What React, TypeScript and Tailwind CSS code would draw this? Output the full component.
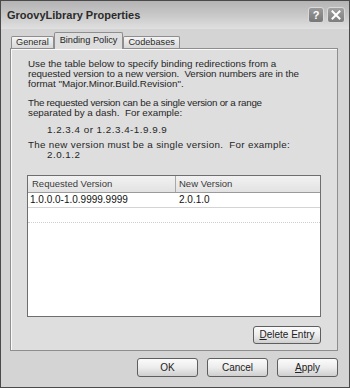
const font = { fontFamily: '"Liberation Sans", Arial, sans-serif' };

const XpButton = ({ children, className = '' }: { children: React.ReactNode; className?: string }) => (
  <div
    className={`flex items-center justify-center rounded-[3px] border border-[#5e5e5e] bg-gradient-to-b from-[#fbfbfb] via-[#ececec] to-[#cfcfcf] text-[10px] text-[#222] ${className}`}
  >
    {children}
  </div>
);

const Tab = ({ label, active }: { label: string; active?: boolean }) =>
  active ? (
    <div className="relative z-10 -mb-px flex h-[17px] items-center rounded-t-[2px] border border-b-0 border-[#8e8e8e] bg-[#dedede] px-[5px] text-[9.2px] text-[#1e1e1e]">
      {label}
    </div>
  ) : (
    <div className="mt-[4px] flex h-[12px] items-center rounded-t-[2px] border border-b-0 border-[#8e8e8e] bg-gradient-to-b from-[#f4f4f4] to-[#d8d8d8] px-[4px] text-[9.2px] text-[#2a2a2a]">
      {label}
    </div>
  );

export default function App() {
  return (
    <div
      style={font}
      className="flex h-[388px] w-[350px] flex-col border border-[#4a4a4a] bg-[#d4d4d4] text-[#222]"
    >
      {/* title bar */}
      <div className="flex h-[28px] shrink-0 items-center justify-between bg-gradient-to-b from-[#b4b4b4] via-[#c8c8c8] to-[#e0e0e0] pl-[6px] pr-[4px]">
        <span className="text-[11px] font-bold text-[#2b2b2b]">GroovyLibrary Properties</span>
        <div className="flex gap-[3px]">
          <div className="flex h-[16px] w-[16px] items-center justify-center rounded-[3px] border border-[#d9d9d9] bg-gradient-to-b from-[#9a9a9a] to-[#777] text-[11px] font-bold text-white">
            ?
          </div>
          <div className="flex h-[16px] w-[18px] items-center justify-center rounded-[3px] border border-[#d9d9d9] bg-gradient-to-b from-[#a2a2a2] to-[#7d7d7d]">
            <svg width="10" height="10" viewBox="0 0 10 10">
              <path d="M1.5 1.5 L8.5 8.5 M8.5 1.5 L1.5 8.5" stroke="white" strokeWidth="2" strokeLinecap="square" />
            </svg>
          </div>
        </div>
      </div>

      {/* body */}
      <div className="flex flex-1 flex-col pl-[9px] pr-[11px] pt-[3px]">
        <div className="flex items-start pl-[1px]">
          <Tab label="General" />
          <Tab label="Binding Policy" active />
          <Tab label="Codebases" />
        </div>

        <div className="flex h-[303px] flex-col border border-[#8e8e8e] bg-[#dedede] px-[16px] pt-[10px] shadow-[inset_1px_1px_0_#fafafa]">
          <div className="px-[1px] text-[9.8px] leading-[10.2px] text-[#262626]">
            <p>
              Use the table below to specify binding redirections from a
              <br />
              <span className="tracking-[-0.1px]">requested version to a new version.&nbsp; Version numbers are in the</span>
              <br />
              format "Major.Minor.Build.Revision".
            </p>
            <p className="mt-[8.5px]">
              <span className="tracking-[-0.25px]">The requested version can be a single version or a range</span>
              <br />
              separated by a dash.&nbsp; For example:
            </p>
            <p className="mt-[6px] pl-[19px] tracking-[0.5px]">1.2.3.4 or 1.2.3.4-1.9.9.9</p>
            <p className="mt-[5.5px] tracking-[0.3px]">The new version must be a single version.&nbsp; For example:</p>
            <p className="pl-[19px] tracking-[0.5px]">2.0.1.2</p>
          </div>

          {/* table */}
          <div className="mt-[14px] flex h-[142px] flex-col border border-[#6e6e6e] bg-white">
            <div className="flex h-[17px] shrink-0 border-b border-[#9a9a9a] bg-gradient-to-b from-[#f2f2f2] to-[#e2e2e2] text-[9.5px] text-[#3a3a3a]">
              <div className="flex w-[148px] items-center border-r border-[#a8a8a8] pl-[4px]">Requested Version</div>
              <div className="flex flex-1 items-center pl-[3px]">New Version</div>
            </div>
            <div className="flex h-[15px] shrink-0 border-b border-[#d4d4d4] text-[10px] text-[#111]">
              <div className="flex w-[148px] items-center pl-[2px]">1.0.0.0-1.0.9999.9999</div>
              <div className="flex flex-1 items-center pl-[3px]">2.0.1.0</div>
            </div>
            <div className="h-[15px] shrink-0 border-b border-dotted border-[#cfcfcf]" />
          </div>

          <div className="mt-[9px] flex justify-end">
            <XpButton className="h-[18px] w-[68px]">
              <span>
                <span className="underline">D</span>elete Entry
              </span>
            </XpButton>
          </div>
        </div>

        <div className="mt-[7px] flex justify-end gap-[9px]">
          <XpButton className="h-[19px] w-[61px]">OK</XpButton>
          <XpButton className="h-[19px] w-[61px]">Cancel</XpButton>
          <XpButton className="h-[19px] w-[61px]">
            <span>
              <span className="underline">A</span>pply
            </span>
          </XpButton>
        </div>
      </div>
    </div>
  );
}
